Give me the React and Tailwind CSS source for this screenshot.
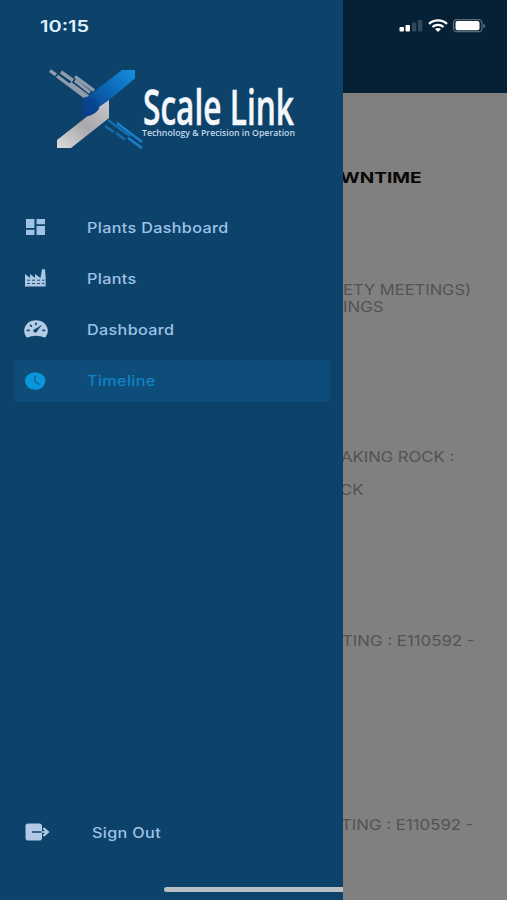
import React from "react";
import { MdDashboard } from "react-icons/md";

const DashboardIcon = () => (
  <svg
    viewBox="3 3 18 18"
    preserveAspectRatio="none"
    className="ml-[25.500px] h-4 w-[19px] fill-[#a9c6e2]"
  >
    <MdDashboard size={24} />
  </svg>
);

const FactoryIcon = () => (
  <svg viewBox="0 0 22 18" className="ml-[25px] h-[18px] w-[22px]">
    <path
      d="M0 17.500V5l5 3.700V5l5 3.700V5l5.500 4L17 .300h3L20.700 9v8.500z"
      fill="#a9c6e2"
    />
    <path
      d="M2 11.200h3M7 11.200h3M12 11.200h3M17 11.200h2.500M2 14.500h3M7 14.500h3M12 14.500h3M17 14.500h2.500"
      stroke="#0d426b"
      strokeWidth=".9"
    />
  </svg>
);

const GaugeIcon = () => (
  <svg viewBox="0 0 24 18" className="ml-[23.500px] h-[18px] w-6">
    <path
      d="M12 .3C5.200.3.200 5 .200 10.800c0 2.200.8 4.300 2.200 6.200.3.400.8.500 1.300.4 2.500-.9 5.200-1.700 8.300-1.700s5.800.8 8.300 1.700c.5.100 1 0 1.300-.4 1.400-1.900 2.200-4 2.200-6.200C23.800 5 18.800.3 12 .3z"
      fill="#b4cde5"
    />
    <path
      d="M12 3.300v1.200M6.500 5.300l.9.8M3.500 10.300h1.500M19 10.300h1.500"
      stroke="#0d426b"
      strokeWidth="1.700"
      strokeLinecap="round"
    />
    <path
      d="M17.500 5.200l-4.200 5.300a1.900 1.600 0 1 1-1.700-1.400z"
      fill="#0d426b"
      stroke="#0d426b"
      strokeWidth=".4"
    />
  </svg>
);

const ClockIcon = () => (
  <svg viewBox="0 0 21 18" className="ml-[25px] h-[18px] w-[21px]">
    <ellipse cx="10.200" cy="9" rx="10.200" ry="8.800" fill="#0b96da" />
    <path
      d="M9.800 3.800v5.700l4.500 2.800"
      fill="none"
      stroke="#0c5f96"
      strokeWidth="1.300"
      strokeLinecap="round"
    />
  </svg>
);

const SignOutIcon = () => (
  <svg viewBox="0 0 25 18" className="ml-[25px] h-[18px] w-[25px]">
    <rect x=".5" y=".5" width="16.500" height="17" rx="2.800" fill="#b0cae6" />
    <path d="M7 9h10" stroke="#0d426b" strokeWidth="1.500" />
    <path d="M16.500 9h6" stroke="#b0cae6" strokeWidth="1.700" />
    <path
      d="M19 4.300l5.500 4.700-5.500 4.700-1.300-1.500L20.800 9l-3.100-3.200z"
      fill="#b0cae6"
    />
  </svg>
);

const Logo = () => (
  <svg viewBox="0 0 250 84" className="ml-[48px] mt-[15px] h-[84px] w-[250px]">
    <defs>
      <linearGradient id="blue" x1="0" y1="1" x2="1" y2="0">
        <stop offset=".1" stopColor="#0a3f8c" />
        <stop offset=".5" stopColor="#0b63b2" />
        <stop offset="1" stopColor="#1590dc" />
      </linearGradient>
      <linearGradient id="silver" x1="0" y1="1" x2="1" y2="0">
        <stop offset="0" stopColor="#dcdcdc" />
        <stop offset=".5" stopColor="#a9a8ac" />
        <stop offset="1" stopColor="#c8c8ca" />
      </linearGradient>
    </defs>
    <g stroke="#8f9cab" strokeWidth="3.400">
      <path d="M2 3.600l6 4.200M9 9l28 21M13 5l12 8.500M22 16l18 13.500M27 13.500l15 12M27 9.500l19 14" />
    </g>
    <g stroke="#176cae" strokeWidth="2.400">
      <path d="M60 53l12 9M57 59l9 6M68 66l9 6.500M72 62l10 7" />
      <path d="M69 56l25 19M80 71l14 10" stroke="#1781cc" />
    </g>
    <path d="M35 33L74 3h13v8.500L61 33l-8 8-14 9-4-3z" fill="url(#blue)" />
    <path d="M35 34l11-4 5 12-12 8-4-3z" fill="#0a4090" opacity=".55" />
    <path
      d="M9 73l30-23.500C48 47 52 42 51 40l10-7v18L23 81H9z"
      fill="url(#silver)"
    />
    <text
      x="95"
      y="57.500"
      fontSize="49"
      fontWeight="600"
      fontFamily="Open Sans, sans-serif"
      fill="#f4f8fc"
      stroke="#f4f8fc"
      strokeWidth=".5"
      textLength="151"
      lengthAdjust="spacingAndGlyphs"
    >
      Scale Link
    </text>
    <text
      x="94"
      y="69"
      fontSize="8.300"
      fontWeight="600"
      fontFamily="Open Sans, sans-serif"
      fill="#c3d8ea"
      textLength="153"
      lengthAdjust="spacingAndGlyphs"
    >
      Technology &amp; Precision in Operation
    </text>
  </svg>
);

const StatusIcons = () => (
  <svg viewBox="0 0 88 16" className="ml-[56px] h-4 w-[88px]">
    <rect x=".5" y="9" width="4.500" height="4.500" rx="1" fill="#fff" />
    <rect x="6.500" y="7" width="4.500" height="6.500" rx="1" fill="#fff" />
    <rect x="13" y="4.500" width="4.300" height="9" rx="1" fill="#30485c" />
    <rect x="19" y="2" width="4.300" height="11.500" rx="1" fill="#30485c" />
    <g fill="none" stroke="#fff" strokeWidth="2.300">
      <path d="M30 5.800c5-4.600 13-4.600 18 0" />
      <path d="M33.500 9c3-2.800 8-2.800 11 0" />
    </g>
    <path d="M36 11c1.800-1.500 4.200-1.500 6 0l-3 3z" fill="#fff" />
    <rect
      x="54.500"
      y="1.700"
      width="28.500"
      height="12"
      rx="3.500"
      fill="none"
      stroke="#5b6c7b"
      strokeWidth="1.300"
    />
    <rect x="56.500" y="3" width="24" height="9.200" rx="2" fill="#fff" />
    <path d="M84.500 6c2 .5 2 3.500 0 4z" fill="#71808d" />
  </svg>
);

const menu = [
  { name: "Plants Dashboard", icon: <DashboardIcon /> },
  { name: "Plants", icon: <FactoryIcon /> },
  { name: "Dashboard", icon: <GaugeIcon /> },
  { name: "Timeline", icon: <ClockIcon />, active: true },
];

const MenuItem = ({ name, icon, active }) => (
  <li
    className={
      active
        ? "flex h-[42px] items-center rounded-sm bg-[#0e4d79] text-[#0f83c5]"
        : "flex h-[42px] items-center text-[#9ec3e6]"
    }
  >
    <div className="-ml-3.5 flex w-[86.500px] shrink-0">{icon}</div>
    <span className="origin-left scale-x-[1.155] whitespace-nowrap text-[14px] font-medium tracking-[0.3px]">
      {name}
    </span>
  </li>
);

const Sidebar = () => (
  <aside className="relative z-10 flex h-full w-[343px] shrink-0 flex-col bg-[#0d426b]">
    <div className="flex h-[52px] items-center pl-10">
      <span className="origin-left scale-x-[1.250] text-[16px] font-semibold text-[#dff1fd]">
        10:15
      </span>
    </div>
    <Logo />
    <ul className="mt-[55px] flex flex-col gap-[9.200px] pl-3.5 pr-[13px]">
      {menu.map((item) => (
        <MenuItem key={item.name} {...item} />
      ))}
    </ul>
    <div className="mb-[47px] mt-auto flex h-[42px] items-center text-[#9ec3e6]">
      <div className="flex w-[91.500px] shrink-0">
        <SignOutIcon />
      </div>
      <span className="origin-left scale-x-[1.155] whitespace-nowrap text-[14px] font-medium tracking-[0.3px]">
        Sign Out
      </span>
    </div>
    <div className="absolute bottom-2 right-0 h-[5px] w-[179px] rounded-l-full bg-[#b9bfc4]" />
  </aside>
);

const Row = ({ children, className }) => (
  <p className={`origin-left whitespace-nowrap ${className}`}>{children}</p>
);

const Timeline = () => (
  <main className="flex h-full grow flex-col bg-[#808080]">
    <header className="h-[93px] shrink-0 bg-[#062136] pt-[18px]">
      <StatusIcons />
    </header>
    <div className="-ml-1 flex flex-col text-[14px] leading-[17px] text-[#535353]">
      <Row className="ml-px mt-[76px] scale-x-[1.270] text-[15px] font-bold text-[#080808]">
        WNTIME
      </Row>
      <Row className="ml-1 mt-[95px] scale-x-[1.180]">ETY MEETINGS)</Row>
      <Row className="ml-1 scale-x-[1.200]">INGS</Row>
      <Row className="ml-0.5 mt-[133px] scale-x-[1.190]">AKING ROCK :</Row>
      <Row className="ml-px mt-4 scale-x-[1.200]">CK</Row>
      <Row className="ml-[3px] mt-[134px] scale-x-[1.200]">
        TING : E110592 -
      </Row>
      <Row className="ml-0.5 mt-[167px] scale-x-[1.200]">TING : E110592 -</Row>
    </div>
  </main>
);

const App = () => {
  return (
    <div className="flex h-[900px] w-[507px] overflow-hidden font-['Inter',sans-serif]">
      <Sidebar />
      <Timeline />
    </div>
  );
};

export default App;
